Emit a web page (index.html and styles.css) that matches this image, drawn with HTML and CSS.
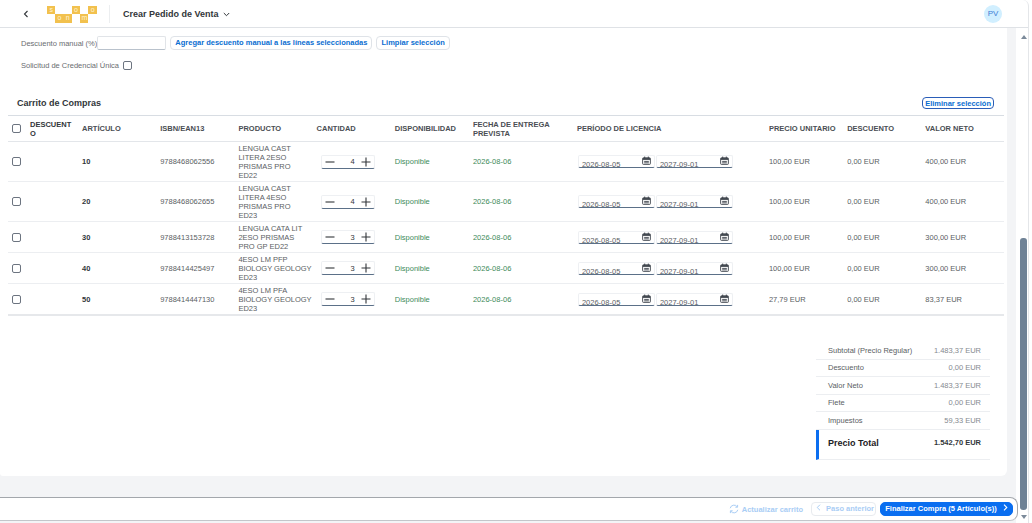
FILE: index.html
```html
<!DOCTYPE html>
<html lang="es">
<head>
    <meta charset="UTF-8">
    <meta name="viewport" content="width=device-width, initial-scale=1.0">
    <title>Crear Pedido de Venta</title>
    <link rel="stylesheet" href="styles.css">
</head>
<body>
    <svg class="defs" width="0" height="0">
        <symbol id="cal" viewBox="0 0 10 10">
            <path d="M1.500 2h7a.8.8 0 0 1 .8.8v5.700a.8.8 0 0 1-.8.8h-7a.8.8 0 0 1-.8-.8V2.800a.8.8 0 0 1 .8-.8z" fill="none" stroke="currentColor" stroke-width="1"/>
            <path d="M1 2.300h8v2H1z" fill="currentColor"/>
            <path d="M3 .6v2M7 .6v2M2.400 6h5.200M2.400 7.600h5.200" fill="none" stroke="currentColor" stroke-width="1"/>
        </symbol>
    </svg>
    <div class="shell">
        <header class="shellbar">
            <svg class="back" width="6" height="8" viewBox="0 0 6 8"><path d="M4.500 1 1.500 4l3 3" fill="none" stroke="#32363a" stroke-width="1.100"/></svg>
            <div class="logo">
                <span class="tile up">s</span><span class="tile">o</span><span class="tile">n</span><span class="tile up">o</span><span class="tile">m</span><span class="tile up">o</span>
            </div>
            <div class="title">Crear Pedido de Venta
                <svg width="7" height="5" viewBox="0 0 7 5"><path d="M.8 1 3.500 3.700 6.200 1" fill="none" stroke="#32363a" stroke-width="1"/></svg>
            </div>
            <div class="avatar">PV</div>
        </header>

        <div class="content">
            <main class="main">
                <section class="card">
                    <div class="form-row">
                        <label class="form-label">Descuento manual (%)</label>
                        <input class="discount-input" type="text">
                        <button class="btn">Agregar descuento manual a las líneas seleccionadas</button>
                        <button class="btn">Limpiar selección</button>
                    </div>
                    <div class="form-row second">
                        <label class="form-label">Solicitud de Credencial Única</label>
                        <span class="check"></span>
                    </div>

                    <div class="cart-head">
                        <h2>Carrito de Compras</h2>
                        <button class="btn focus">Eliminar selección</button>
                    </div>

                    <table class="cart">
                        <colgroup>
                            <col class="c-check"><col class="c-desc"><col class="c-78"><col class="c-78"><col class="c-78"><col class="c-78"><col class="c-78"><col class="c-fecha"><col class="c-lic"><col class="c-78"><col class="c-78"><col class="c-78">
                        </colgroup>
                        <thead>
                            <tr>
                                <th><span class="check"></span></th>
                                <th class="dark">DESCUENT<br>O</th>
                                <th>ARTÍCULO</th>
                                <th>ISBN/EAN13</th>
                                <th>PRODUCTO</th>
                                <th>CANTIDAD</th>
                                <th>DISPONIBILIDAD</th>
                                <th>FECHA DE ENTREGA PREVISTA</th>
                                <th>PERÍODO DE LICENCIA</th>
                                <th>PRECIO UNITARIO</th>
                                <th>DESCUENTO</th>
                                <th>VALOR NETO</th>
                            </tr>
                        </thead>
                        <tbody id="rows"></tbody>
                    </table>

                    <div class="summary">
                        <div class="sum-row"><span>Subtotal (Precio Regular)</span><span class="val">1.483,37 EUR</span></div>
                        <div class="sum-row"><span>Descuento</span><span class="val">0,00 EUR</span></div>
                        <div class="sum-row"><span>Valor Neto</span><span class="val">1.483,37 EUR</span></div>
                        <div class="sum-row"><span>Flete</span><span class="val">0,00 EUR</span></div>
                        <div class="sum-row"><span>Impuestos</span><span class="val">59,33 EUR</span></div>
                        <div class="sum-total"><span class="total-label">Precio Total</span><span>1.542,70 EUR</span></div>
                    </div>
                </section>

                <footer class="actions">
                    <span class="refresh">
                        <svg width="10" height="10" viewBox="0 0 10 10"><path d="M1.200 4.200A3.900 3.900 0 0 1 8.200 2.800M8.800 5.800A3.900 3.900 0 0 1 1.800 7.200M8.600.9v2.300H6.300M1.400 9.100V6.800h2.300" fill="none" stroke="#a9cdf5" stroke-width="1"/></svg>
                        Actualizar carrito
                    </span>
                    <button class="btn disabled">
                        <svg width="5" height="7" viewBox="0 0 5 7"><path d="M4 .7 1.200 3.500 4 6.300" fill="none" stroke="#a9cdf5" stroke-width="1"/></svg>
                        Paso anterior
                    </button>
                    <button class="btn primary">Finalizar Compra (5 Artículo(s))
                        <svg width="5" height="7" viewBox="0 0 5 7"><path d="M1 .7 3.800 3.500 1 6.300" fill="none" stroke="#fff" stroke-width="1.100"/></svg>
                    </button>
                </footer>
            </main>
            <div class="scrollbar">
                <span class="arrow-up"></span>
                <span class="thumb"></span>
                <span class="arrow-down"></span>
            </div>
        </div>
    </div>
    <script src="rows.js"></script>
</body>
</html>
```

FILE: styles.css
```css
* {
    box-sizing: border-box;
}

html, body {
    margin: 0;
    height: 523px;
    overflow: hidden;
    background-color: #fff;
}

body {
    font-family: "Liberation Sans", Arial, sans-serif;
    font-size: 7.500px;
    color: #32363a;
}

.defs {
    position: absolute;
}

.shell {
    width: 1029px;
    height: 523px;
    display: flex;
    flex-direction: column;
    border-right: 1px solid #e4e6e9;
    border-top-right-radius: 6px;
}

.shellbar {
    height: 28px;
    flex: none;
    display: flex;
    align-items: center;
    padding-left: 23px;
    border-bottom: 1px solid #dfe2e6;
}

.back {
    margin-right: 18px;
}

.logo {
    width: 50px;
    height: 18px;
    display: flex;
    align-items: flex-end;
}

.tile {
    width: 8.300px;
    height: 9px;
    background-color: #f2c14e;
    color: #fff4d6;
    font-size: 7px;
    line-height: 8px;
    text-align: center;
}

.tile.up {
    align-self: flex-start;
    height: 8.500px;
    margin-top: 1px;
}

.title {
    margin-left: 12px;
    padding-left: 13px;
    height: 18px;
    line-height: 18px;
    border-left: 1px solid #eceef0;
    font-size: 9px;
    font-weight: 700;
}

.title svg {
    margin-left: 2px;
}

.avatar {
    margin-left: auto;
    margin-right: 26px;
    width: 18px;
    height: 18px;
    border-radius: 50%;
    background-color: #d1efff;
    color: #3f7fd6;
    font-size: 8px;
    line-height: 18px;
    text-align: center;
}

.content {
    flex: 1;
    min-height: 0;
    display: flex;
}

.main {
    width: 1016px;
    display: flex;
    flex-direction: column;
    background-color: #f3f4f6;
}

.card {
    width: 1007px;
    height: 448px;
    flex: none;
    padding: 8px 8px 0;
    background-color: #fff;
    border-radius: 0 0 6px 3px;
}

.form-row {
    height: 14px;
    display: flex;
    align-items: center;
    padding-left: 13px;
}

.form-row.second {
    margin-top: 8px;
}

.form-label {
    color: #6a6d70;
}

.second .form-label {
    margin-right: 4px;
}

.discount-input {
    width: 69px;
    height: 14px;
    margin: 0 4px 0 0;
    padding: 0 3px;
    border: 1px solid #e1e4e8;
    border-bottom-color: #b9c2cc;
    border-radius: 2px;
    background-color: #fff;
}

.btn {
    height: 14px;
    margin-right: 4px;
    padding: 0 4px;
    border: 1px solid #dfe3e8;
    border-radius: 4px;
    background-color: #fff;
    color: #0a6ed1;
    font-family: inherit;
    font-size: 7.500px;
    font-weight: 700;
    line-height: 12px;
    white-space: nowrap;
}

.btn.focus {
    height: 12px;
    margin-right: 5px;
    padding: 0 2px;
    border: 1.500px solid #2a5db8;
    line-height: 9px;
}

.check {
    display: inline-block;
    width: 9px;
    height: 9px;
    border: 1px solid #6c7480;
    border-radius: 2px;
    background-color: #fff;
    vertical-align: middle;
}

.cart-head {
    height: 12px;
    margin-top: 25px;
    display: flex;
    align-items: center;
    justify-content: space-between;
}

.cart-head h2 {
    margin: 0 0 0 9px;
    font-size: 9px;
    font-weight: 700;
}

.cart {
    width: 991px;
    margin-top: 6px;
    border-collapse: collapse;
    table-layout: fixed;
}

.c-check { width: 22px; }
.c-desc { width: 52px; }
.c-78 { width: 78.200px; }
.c-fecha { width: 104px; }
.c-lic { width: 192px; }

.cart th {
    height: 26px;
    padding: 0 4px 0 0;
    border-top: 1px solid #d8dde3;
    border-bottom: 1px solid #e3e6ea;
    color: #4a4e53;
    font-weight: 700;
    line-height: 9px;
    text-align: left;
}

.cart th.dark {
    color: #32363a;
}

.cart th:first-child,
.cart td:first-child {
    padding-left: 4px;
}

.cart td {
    padding: 1.500px 4px 1.500px 0;
    border-bottom: 1px solid #eceef1;
    color: #5a5e63;
    line-height: 9px;
    vertical-align: middle;
}

.cart tr:last-child td {
    border-bottom: 2px solid #e6e8eb;
}

.cart td.item {
    color: #32363a;
    font-weight: 700;
}

.cart td.green {
    color: #3d8b5a;
}

.stepper {
    width: 54px;
    height: 14px;
    margin-left: 4px;
    padding: 0 3px;
    display: flex;
    align-items: center;
    border: 1px solid #eef0f3;
    border-bottom-color: #5b7088;
    border-radius: 2px;
}

.stepper svg {
    flex: none;
}

.stepper .qty {
    flex: 1;
    padding-right: 6px;
    color: #32363a;
    text-align: right;
}

.period {
    display: flex;
    gap: 1px;
    margin-left: 1px;
}

.date {
    width: 77px;
    height: 13px;
    padding: 4px 3px 0 3px;
    display: flex;
    justify-content: space-between;
    border: 1px solid #eef0f3;
    border-bottom-color: #5b7088;
    border-radius: 2px;
    line-height: 9px;
}

.date svg {
    margin-top: -4px;
    color: #3a4048;
}

.summary {
    width: 174px;
    margin: 26px 0 0 808px;
}

.sum-row {
    height: 17.500px;
    padding: 0 9px 0 12px;
    display: flex;
    align-items: center;
    justify-content: space-between;
    border-bottom: 1px solid #eceef1;
    color: #5a5e63;
}

.sum-row .val {
    color: #858a90;
}

.sum-total {
    height: 30px;
    padding: 0 9px 3px 9px;
    display: flex;
    align-items: center;
    justify-content: space-between;
    border-left: 3.500px solid #0a6ef0;
    border-bottom: 1px solid #eceef1;
    font-weight: 700;
}

.total-label {
    font-size: 9px;
    color: #1d2125;
}

.actions {
    width: 1018px;
    height: 24px;
    margin-top: 21px;
    padding-right: 4px;
    flex: none;
    display: flex;
    align-items: center;
    justify-content: flex-end;
    background-color: #fff;
    border: 1px solid #a3a7ac;
    border-width: 1px 1px 1px 0;
    border-bottom-color: #c3c6ca;
    border-radius: 0 8px 8px 0;
}

.refresh {
    margin-right: 8px;
    display: flex;
    align-items: center;
    gap: 3px;
    color: #a9cdf5;
    font-weight: 700;
}

.btn.disabled {
    width: 65px;
    margin-right: 4px;
    color: #a9cdf5;
    border-color: #e8ebef;
}

.btn.disabled svg {
    margin-right: 3px;
}

.btn.primary {
    width: 133px;
    margin-right: 0;
    background-color: #0a6ef0;
    border-color: #0a6ef0;
    border-radius: 5px;
    color: #fff;
}

.btn.primary svg {
    margin-left: 4px;
}

.scrollbar {
    flex: 1;
    display: flex;
    flex-direction: column;
    align-items: center;
    padding: 7px 0 2px 3px;
}

.arrow-up {
    width: 0;
    height: 0;
    border: 3px solid transparent;
    border-top: 0;
    border-bottom: 4px solid #7b8a9a;
}

.thumb {
    width: 7px;
    height: 272px;
    margin-top: 199px;
    border-radius: 3px;
    background-color: #6f8296;
}

.arrow-down {
    width: 0;
    height: 0;
    margin-top: 5px;
    border: 3px solid transparent;
    border-bottom: 0;
    border-top: 4px solid #7b8a9a;
}
```

FILE: rows.js
```js
var items = [
    ["10", "9788468062556", "LENGUA CAST<br>LITERA 2ESO<br>PRISMAS PRO<br>ED22", 4, "100,00 EUR", "400,00 EUR"],
    ["20", "9788468062655", "LENGUA CAST<br>LITERA 4ESO<br>PRISMAS PRO<br>ED23", 4, "100,00 EUR", "400,00 EUR"],
    ["30", "9788413153728", "LENGUA CATA LIT<br>2ESO PRISMAS<br>PRO GP ED22", 3, "100,00 EUR", "300,00 EUR"],
    ["40", "9788414425497", "4ESO LM PFP<br>BIOLOGY GEOLOGY<br>ED23", 3, "100,00 EUR", "300,00 EUR"],
    ["50", "9788414447130", "4ESO LM PFA<br>BIOLOGY GEOLOGY<br>ED23", 3, "27,79 EUR", "83,37 EUR"]
];

var minus = '<svg width="10" height="10" viewBox="0 0 10 10"><path d="M.5 5h9" stroke="#32363a" stroke-width="1.100"/></svg>';
var plus = '<svg width="10" height="10" viewBox="0 0 10 10"><path d="M.5 5h9M5 .5v9" stroke="#32363a" stroke-width="1.100"/></svg>';
var cal = '<svg width="9" height="9"><use href="#cal"/></svg>';

document.getElementById("rows").innerHTML = items.map(function (it) {
    return '<tr>' +
        '<td><span class="check"></span></td><td></td>' +
        '<td class="item">' + it[0] + '</td>' +
        '<td>' + it[1] + '</td>' +
        '<td>' + it[2] + '</td>' +
        '<td><div class="stepper">' + minus + '<span class="qty">' + it[3] + '</span>' + plus + '</div></td>' +
        '<td class="green">Disponible</td>' +
        '<td class="green">2026-08-06</td>' +
        '<td><div class="period"><div class="date">2026-08-05' + cal + '</div><div class="date">2027-09-01' + cal + '</div></div></td>' +
        '<td>' + it[4] + '</td>' +
        '<td>0,00 EUR</td>' +
        '<td>' + it[5] + '</td>' +
    '</tr>';
}).join("");
```
